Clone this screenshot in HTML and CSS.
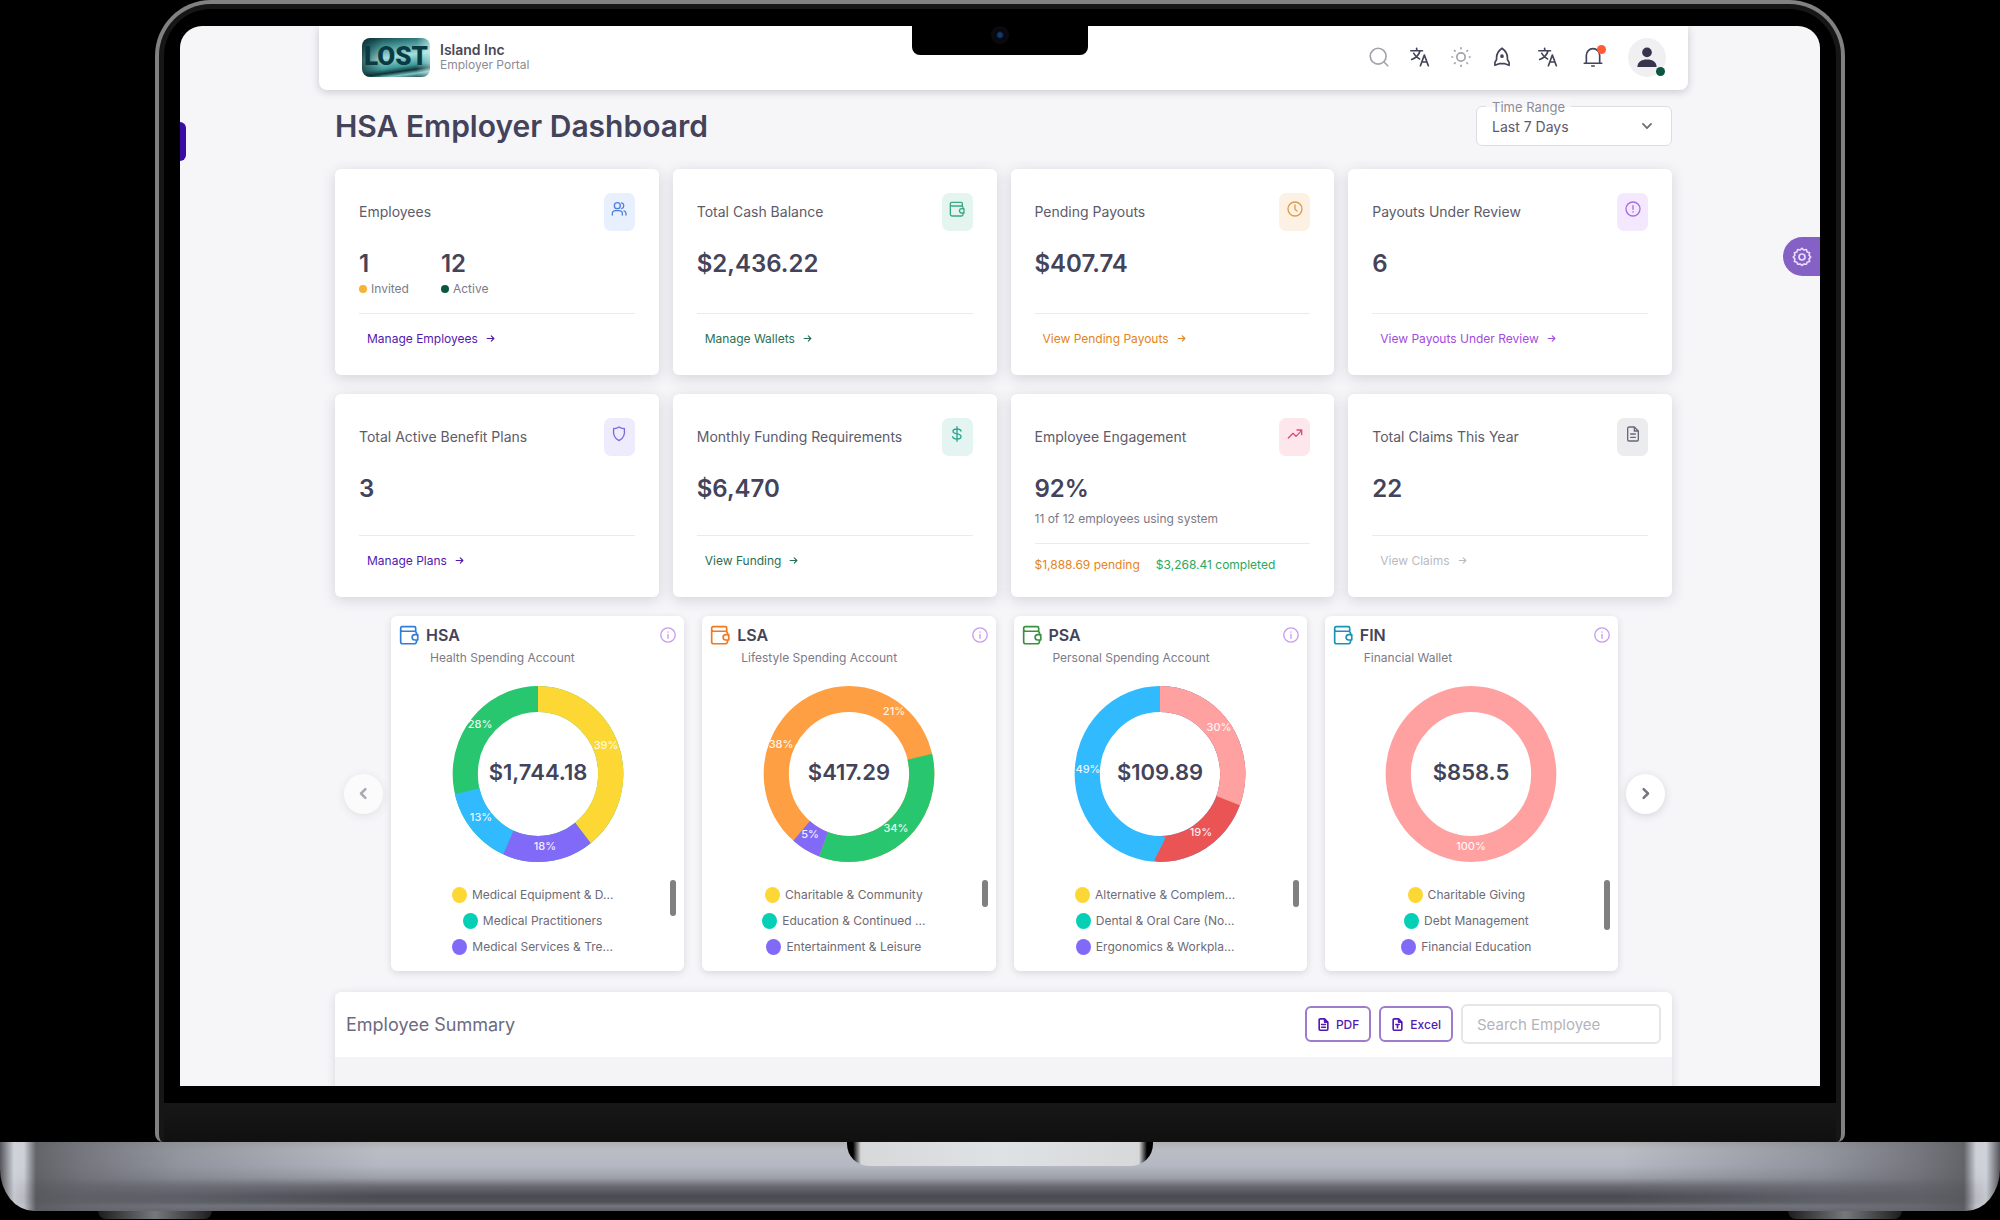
FILE: index.html
```html
<!DOCTYPE html>
<html lang="en">
<head>
    <meta charset="UTF-8">
    <meta name="viewport" content="width=device-width, initial-scale=1.0">
    <title>HSA Employer Dashboard</title>
    <link rel="stylesheet" href="styles.css">
</head>
<body>
    <svg class="sprite" aria-hidden="true">
        <symbol id="i-search" viewBox="0 0 24 24"><circle cx="11" cy="11" r="9.500"/><path d="M18 18L22.500 22.500"/></symbol>
        <symbol id="i-translate" viewBox="0 0 24 24"><path d="M1 4.500h14M8 1.500v3M12 4.500c-1 4.500-5 8.500-10 10.500M4.500 7.500c1.500 3.200 4 5.500 7 6.800M12.500 22.500l4.700-13L22 22.500M14.200 18h6"/></symbol>
        <symbol id="i-sun" viewBox="0 0 24 24"><circle cx="12" cy="12" r="5"/><path d="M12 1v1M12 22v1M1 12h1M22 12h1M4.200 4.200l.7.7M19.100 19.100l.7.7M4.200 19.800l.7-.7M19.100 4.900l.7-.7"/></symbol>
        <symbol id="i-rocket" viewBox="0 0 24 24"><path d="M12 1.500C8 4.500 5.500 8 5.500 12.500V15L3.500 18.500v3.500l5-2h7l5 2v-3.500L18.500 15v-2.500c0-4.500-2.500-8-6.500-11z"/><circle cx="12" cy="11" r="1.200"/></symbol>
        <symbol id="i-bell" viewBox="0 0 24 24"><path d="M1.500 19.500h21M4 19.500V10a8 8 0 0 1 16 0v9.500M10.500 22.800h3"/></symbol>
        <symbol id="i-user" viewBox="0 0 24 24"><circle cx="12" cy="6.500" r="5.800"/><path d="M.5 24c0-5.800 4.500-9 11.500-9s11.500 3.200 11.500 9z"/></symbol>
        <symbol id="i-gear" viewBox="0 0 24 24"><path d="M12 1.500l2.200 2.100 3-.6 1 2.900 2.900 1-.6 3L22.500 12l-2 2.300.6 3-2.900 1-1 2.400-3-.3L12 22l-2.200-1.600-3 .3-1-2.400-2.900-1 .6-3-2-2.300 2-2.100-.6-3 2.900-1 1-2.900 3 .6z"/><circle cx="12" cy="12" r="3.600"/></symbol>
        <symbol id="i-chevron" viewBox="0 0 24 24"><path d="M5 8.500l7 7 7-7"/></symbol>
        <symbol id="i-left" viewBox="0 0 24 24"><path d="M15 5l-7 7 7 7"/></symbol>
        <symbol id="i-right" viewBox="0 0 24 24"><path d="M9 5l7 7-7 7"/></symbol>
        <symbol id="i-arrow" viewBox="0 0 24 24"><path d="M3 12h18M14 5l7 7-7 7"/></symbol>
        <symbol id="i-users" viewBox="0 0 24 24"><circle cx="9.500" cy="7" r="4.500"/><path d="M2 21v-2c0-3 2.500-4.500 5-4.500h5c2.500 0 5 1.500 5 4.500v2M16 2.700a4.500 4.500 0 0 1 0 8.600M22.500 21v-2c0-2-1.200-3.600-3-4.200"/></symbol>
        <symbol id="i-wallet" viewBox="0 0 24 24"><path d="M20 7.500V3.500A1.500 1.500 0 0 0 18.500 2H4a2 2 0 0 0-2 2v16a2.500 2.500 0 0 0 2.500 2.500h14A2.500 2.500 0 0 0 21 20v-2M2 5a2.500 2.500 0 0 0 2.500 2.500h14A2.500 2.500 0 0 1 21 10v2M22.500 11.500V18H19a3.200 3.200 0 0 1 0-6.500z"/></symbol>
        <symbol id="i-clock" viewBox="0 0 24 24"><circle cx="12" cy="12" r="10.500"/><path d="M12 6v6.500l3 2.500"/></symbol>
        <symbol id="i-alert" viewBox="0 0 24 24"><circle cx="12" cy="12" r="10.500"/><path d="M12 7v5.500M12 16v.6"/></symbol>
        <symbol id="i-info" viewBox="0 0 24 24"><circle cx="12" cy="12" r="10.800"/><path d="M12 7.200v.6M12 11v6"/></symbol>
        <symbol id="i-shield" viewBox="0 0 24 24"><path d="M12 1.500c2.500 1.800 5.200 2.500 8 2.300 1 7.200-.5 14.500-8 18.200-7.500-3.700-9-11-8-18.200 2.800.2 5.500-.5 8-2.300z"/></symbol>
        <symbol id="i-dollar" viewBox="0 0 24 24"><path d="M18 7.500C17.500 5.500 15.500 4.500 12 4.500c-3.500 0-6 1.300-6 3.800 0 5 12 2.200 12 7.400 0 2.500-2.500 3.800-6 3.800s-6-1-6.500-3.500M12 1v22"/></symbol>
        <symbol id="i-trend" viewBox="0 0 24 24"><path d="M2 18l7-7 4.500 4.500L22 6.500M15 6h7v7"/></symbol>
        <symbol id="i-file" viewBox="0 0 24 24"><path d="M14 1.500H6a2 2 0 0 0-2 2v17a2 2 0 0 0 2 2h12a2 2 0 0 0 2-2V7.500zM14 1.500v6h6M8.500 12h7M8.500 17h7"/></symbol>
        <symbol id="i-xls" viewBox="0 0 24 24"><path d="M14 1.500H6a2 2 0 0 0-2 2v17a2 2 0 0 0 2 2h12a2 2 0 0 0 2-2V7.500zM14 1.500v6h6M9 12h6M12 12v6"/></symbol>
    </svg>

    <div class="lid">
        <div class="camera-notch"><span class="camera"></span></div>
        <div class="screen">
            <span class="side-tab"></span>
            <button class="gear-btn" type="button" aria-label="Settings"><svg class="icon"><use href="#i-gear"/></svg></button>

            <header class="topbar">
                <div class="logo">LOST</div>
                <div class="brand">
                    <strong>Island Inc</strong>
                    <span>Employer Portal</span>
                </div>
                <nav class="actions">
                    <button type="button" class="muted" aria-label="Search"><svg class="icon"><use href="#i-search"/></svg></button>
                    <button type="button" aria-label="Translate"><svg class="icon"><use href="#i-translate"/></svg></button>
                    <button type="button" class="muted" aria-label="Theme"><svg class="icon"><use href="#i-sun"/></svg></button>
                    <button type="button" aria-label="Shortcuts"><svg class="icon"><use href="#i-rocket"/></svg></button>
                    <button type="button" class="language" aria-label="Language"><svg class="icon"><use href="#i-translate"/></svg></button>
                    <button type="button" class="bell" aria-label="Notifications"><svg class="icon"><use href="#i-bell"/></svg></button>
                    <button type="button" class="avatar" aria-label="Account"><svg class="icon"><use href="#i-user"/></svg></button>
                </nav>
            </header>

            <main class="content">
                <div class="heading">
                    <h1>HSA Employer Dashboard</h1>
                    <div class="range">
                        <label for="range">Time Range</label>
                        <select id="range">
                            <option>Last 7 Days</option>
                            <option>Last 30 Days</option>
                        </select>
                        <svg class="icon"><use href="#i-chevron"/></svg>
                    </div>
                </div>

                <section class="stats">
                    <article class="card">
                        <div class="card-head"><h2>Employees</h2><span class="tile blue"><svg class="icon"><use href="#i-users"/></svg></span></div>
                        <div class="pair">
                            <div><p class="value">1</p><p class="note"><i class="dot amber"></i>Invited</p></div>
                            <div><p class="value">12</p><p class="note"><i class="dot dark"></i>Active</p></div>
                        </div>
                        <div class="card-foot"><a class="link purple" href="#">Manage Employees <svg class="icon"><use href="#i-arrow"/></svg></a></div>
                    </article>
                    <article class="card">
                        <div class="card-head"><h2>Total Cash Balance</h2><span class="tile green"><svg class="icon"><use href="#i-wallet"/></svg></span></div>
                        <p class="value">$2,436.22</p>
                        <div class="card-foot"><a class="link forest" href="#">Manage Wallets <svg class="icon"><use href="#i-arrow"/></svg></a></div>
                    </article>
                    <article class="card">
                        <div class="card-head"><h2>Pending Payouts</h2><span class="tile orange"><svg class="icon"><use href="#i-clock"/></svg></span></div>
                        <p class="value">$407.74</p>
                        <div class="card-foot"><a class="link amber-text" href="#">View Pending Payouts <svg class="icon"><use href="#i-arrow"/></svg></a></div>
                    </article>
                    <article class="card">
                        <div class="card-head"><h2>Payouts Under Review</h2><span class="tile violet"><svg class="icon"><use href="#i-alert"/></svg></span></div>
                        <p class="value">6</p>
                        <div class="card-foot"><a class="link violet-text" href="#">View Payouts Under Review <svg class="icon"><use href="#i-arrow"/></svg></a></div>
                    </article>
                    <article class="card">
                        <div class="card-head"><h2>Total Active Benefit Plans</h2><span class="tile indigo"><svg class="icon"><use href="#i-shield"/></svg></span></div>
                        <p class="value">3</p>
                        <div class="card-foot"><a class="link purple" href="#">Manage Plans <svg class="icon"><use href="#i-arrow"/></svg></a></div>
                    </article>
                    <article class="card">
                        <div class="card-head"><h2>Monthly Funding Requirements</h2><span class="tile teal"><svg class="icon"><use href="#i-dollar"/></svg></span></div>
                        <p class="value">$6,470</p>
                        <div class="card-foot"><a class="link forest" href="#">View Funding <svg class="icon"><use href="#i-arrow"/></svg></a></div>
                    </article>
                    <article class="card">
                        <div class="card-head"><h2>Employee Engagement</h2><span class="tile pink"><svg class="icon"><use href="#i-trend"/></svg></span></div>
                        <p class="value">92%</p>
                        <p class="note spaced">11 of 12 employees using system</p>
                        <div class="card-foot totals"><span class="amber-text">$1,888.69 pending</span><span class="green-text">$3,268.41 completed</span></div>
                    </article>
                    <article class="card">
                        <div class="card-head"><h2>Total Claims This Year</h2><span class="tile gray"><svg class="icon"><use href="#i-file"/></svg></span></div>
                        <p class="value">22</p>
                        <div class="card-foot"><a class="link disabled" href="#">View Claims <svg class="icon"><use href="#i-arrow"/></svg></a></div>
                    </article>
                </section>

                <section class="carousel">
                    <button class="nav-btn" type="button" aria-label="Previous" disabled><svg class="icon"><use href="#i-left"/></svg></button>
                    <div class="wallets">
                        <article class="wallet">
                            <div class="wallet-head"><svg class="icon c-blue"><use href="#i-wallet"/></svg><h3>HSA</h3><svg class="icon info"><use href="#i-info"/></svg></div>
                            <p class="subtitle">Health Spending Account</p>
                            <svg class="donut" viewBox="-100 -88 200 176">
                                <g class="ring">
                                    <circle r="75" pathLength="100" stroke="#28c76f"/>
                                    <circle r="75" pathLength="100" stroke="#fdd835" stroke-dasharray="39.400 100"/>
                                    <circle r="75" pathLength="100" stroke="#826af9" stroke-dasharray="17.300 100" stroke-dashoffset="-39.400"/>
                                    <circle r="75" pathLength="100" stroke="#32baff" stroke-dasharray="14.600 100" stroke-dashoffset="-56.700"/>
                                </g>
                                <text class="pct" x="68" y="-29">39%</text>
                                <text class="pct" x="7" y="72">18%</text>
                                <text class="pct" x="-57" y="43">13%</text>
                                <text class="pct" x="-58" y="-50">28%</text>
                                <text class="total" x="0" y="-2">$1,744.18</text>
                            </svg>
                            <div class="legend">
                                <ul>
                                    <li><i class="swatch yellow"></i>Medical Equipment &amp; D...</li>
                                    <li><i class="swatch aqua"></i>Medical Practitioners</li>
                                    <li><i class="swatch lilac"></i>Medical Services &amp; Tre...</li>
                                </ul>
                                <span class="thumb medium"></span>
                            </div>
                        </article>
                        <article class="wallet">
                            <div class="wallet-head"><svg class="icon c-orange"><use href="#i-wallet"/></svg><h3>LSA</h3><svg class="icon info"><use href="#i-info"/></svg></div>
                            <p class="subtitle">Lifestyle Spending Account</p>
                            <svg class="donut" viewBox="-100 -88 200 176">
                                <g class="ring">
                                    <circle r="75" pathLength="100" stroke="#ff9f43"/>
                                    <circle r="75" pathLength="100" stroke="#28c76f" stroke-dasharray="34.400 100" stroke-dashoffset="-21.300"/>
                                    <circle r="75" pathLength="100" stroke="#826af9" stroke-dasharray="5.600 100" stroke-dashoffset="-55.700"/>
                                </g>
                                <text class="pct" x="45" y="-63">21%</text>
                                <text class="pct" x="47" y="54">34%</text>
                                <text class="pct" x="-39" y="60">5%</text>
                                <text class="pct" x="-68" y="-30">38%</text>
                                <text class="total" x="0" y="-2">$417.29</text>
                            </svg>
                            <div class="legend">
                                <ul>
                                    <li><i class="swatch yellow"></i>Charitable &amp; Community</li>
                                    <li><i class="swatch aqua"></i>Education &amp; Continued ...</li>
                                    <li><i class="swatch lilac"></i>Entertainment &amp; Leisure</li>
                                </ul>
                                <span class="thumb short"></span>
                            </div>
                        </article>
                        <article class="wallet">
                            <div class="wallet-head"><svg class="icon c-green"><use href="#i-wallet"/></svg><h3>PSA</h3><svg class="icon info"><use href="#i-info"/></svg></div>
                            <p class="subtitle">Personal Spending Account</p>
                            <svg class="donut" viewBox="-100 -88 200 176">
                                <g class="ring">
                                    <circle r="75" pathLength="100" stroke="#32baff"/>
                                    <circle r="75" pathLength="100" stroke="#ea5455" stroke-dasharray="50 100"/>
                                    <circle r="75" pathLength="100" stroke="#ffa1a1" stroke-dasharray="30.800 100"/>
                                </g>
                                <text class="pct" x="59" y="-47">30%</text>
                                <text class="pct" x="41" y="58">19%</text>
                                <text class="pct" x="-72" y="-5">49%</text>
                                <text class="total" x="0" y="-2">$109.89</text>
                            </svg>
                            <div class="legend">
                                <ul>
                                    <li><i class="swatch yellow"></i>Alternative &amp; Complem...</li>
                                    <li><i class="swatch aqua"></i>Dental &amp; Oral Care (No...</li>
                                    <li><i class="swatch lilac"></i>Ergonomics &amp; Workpla...</li>
                                </ul>
                                <span class="thumb short"></span>
                            </div>
                        </article>
                        <article class="wallet">
                            <div class="wallet-head"><svg class="icon c-cyan"><use href="#i-wallet"/></svg><h3>FIN</h3><svg class="icon info"><use href="#i-info"/></svg></div>
                            <p class="subtitle">Financial Wallet</p>
                            <svg class="donut" viewBox="-100 -88 200 176">
                                <g class="ring">
                                    <circle r="75" stroke="#ffa1a1"/>
                                </g>
                                <text class="pct" x="0" y="72">100%</text>
                                <text class="total" x="0" y="-2">$858.5</text>
                            </svg>
                            <div class="legend">
                                <ul>
                                    <li><i class="swatch yellow"></i>Charitable Giving</li>
                                    <li><i class="swatch aqua"></i>Debt Management</li>
                                    <li><i class="swatch lilac"></i>Financial Education</li>
                                </ul>
                                <span class="thumb long"></span>
                            </div>
                        </article>
                    </div>
                    <button class="nav-btn" type="button" aria-label="Next"><svg class="icon"><use href="#i-right"/></svg></button>
                </section>

                <section class="summary">
                    <div class="summary-head">
                        <h2>Employee Summary</h2>
                        <button class="export" type="button"><svg class="icon"><use href="#i-file"/></svg>PDF</button>
                        <button class="export" type="button"><svg class="icon"><use href="#i-xls"/></svg>Excel</button>
                        <input type="text" placeholder="Search Employee" aria-label="Search Employee">
                    </div>
                    <div class="summary-body"></div>
                </section>
            </main>
        </div>
        <div class="chin"></div>
    </div>
    <div class="base"><div class="lip"></div></div>
    <div class="feet"><span></span><span></span></div>
</body>
</html>
```
FILE: styles.css
```css
* {
    box-sizing: border-box;
}
body {
    display: flex;
    flex-direction: column;
    height: 100vh;
    margin: 0;
    background-color: #000;
    color: #6d6b77;
    font-family: Inter, "Noto Sans", sans-serif;
    font-size: 14px;
    overflow: hidden;
}
h1, h2, h3, p, ul {
    margin: 0;
    padding: 0;
}
button, select, input {
    font-family: inherit;
}
button {
    padding: 0;
    border: none;
    background: none;
    color: inherit;
    cursor: pointer;
}
a {
    text-decoration: none;
}
.sprite {
    position: absolute;
    width: 0;
    height: 0;
}
.icon {
    flex: none;
    width: 16px;
    height: 16px;
    fill: none;
    stroke: currentColor;
    stroke-width: 2;
    stroke-linecap: round;
    stroke-linejoin: round;
}

/* laptop */
.lid {
    position: relative;
    flex: 1;
    display: flex;
    flex-direction: column;
    min-height: 0;
    margin: 0 155px;
    padding: 22px 21px 0;
    border: 4px solid #828080;
    border-bottom: none;
    border-radius: 56px 56px 8px 8px;
    box-shadow: inset 0 0 0 5px #161616;
}
.screen {
    position: relative;
    flex: 1;
    min-height: 0;
    overflow: hidden;
    border-radius: 22px 22px 0 0;
    background-color: #f6f6f9;
}
.chin {
    flex: none;
    height: 39px;
    margin: 17px -16px 0;
    background: linear-gradient(#171717, #101010);
}
.camera-notch {
    position: absolute;
    z-index: 2;
    top: 18px;
    left: 50%;
    width: 176px;
    height: 33px;
    margin-left: -88px;
    border-radius: 0 0 8px 8px;
    background-color: #000;
}
.camera {
    display: block;
    width: 18px;
    height: 18px;
    margin: 4px auto;
    border-radius: 50%;
    background: radial-gradient(circle, #123a72 2px, #05070d 4px, #0c0c0f 9px);
}
.base {
    flex: none;
    height: 69px;
    border-radius: 0 0 34px 34px / 0 0 42px 42px;
    background:
        linear-gradient(90deg, #55565b 0, rgba(210, 213, 220, 0.9) 14px, rgba(210, 213, 220, 0.8) 24px, rgba(90, 91, 96, 0.9) 36px, rgba(100, 101, 108, 0.8) 80px, rgba(110, 112, 122, 0.5) 180px, rgba(130, 132, 142, 0) 380px, rgba(130, 132, 142, 0) calc(100% - 380px), rgba(110, 112, 122, 0.5) calc(100% - 180px), rgba(100, 101, 108, 0.8) calc(100% - 80px), rgba(90, 91, 96, 0.9) calc(100% - 36px), rgba(210, 213, 220, 0.8) calc(100% - 24px), rgba(210, 213, 220, 0.9) calc(100% - 14px), #55565b 100%),
        linear-gradient(#aeb0b3, #bbbdc4 8px, #b4b8c2 24px, #9da0a9 36px, #6b6c73 44px, #4b4c52 54px, #505157 60px, #74757d 64px, #5e5f66);
}
.lip {
    width: 306px;
    height: 24px;
    margin: 0 auto;
    border-radius: 0 0 22px 22px;
    background: linear-gradient(90deg, #000 6px, #d6d8da 14px, #dfe2e4 50%, #d6d8da calc(100% - 14px), #000 calc(100% - 6px));
}
.feet {
    flex: none;
    display: flex;
    justify-content: space-between;
    height: 9px;
    padding: 0 98px;
}
.feet span {
    width: 114px;
    height: 8px;
    border-radius: 0 0 14px 14px;
    background: linear-gradient(90deg, #1c1c1e, #77787c 50%, #1c1c1e);
}
.side-tab {
    position: absolute;
    top: 96px;
    left: 0;
    width: 6px;
    height: 39px;
    border-radius: 0 6px 6px 0;
    background-color: #3a0ca3;
}
.gear-btn {
    position: absolute;
    top: 211px;
    right: 0;
    width: 37px;
    height: 39px;
    border-radius: 20px 0 0 20px;
    background-color: #8561c5;
    color: #eadcff;
}
.gear-btn .icon {
    display: block;
    width: 20px;
    height: 20px;
    margin-left: 9px;
}

/* top bar */
.topbar {
    display: flex;
    align-items: center;
    height: 64px;
    margin: 0 132px 0 139px;
    padding: 0 22px 2px 43px;
    border-radius: 0 0 8px 8px;
    background-color: #fff;
    box-shadow: 0 2px 8px rgba(47, 43, 61, 0.22);
}
.logo {
    width: 68px;
    height: 39px;
    border-radius: 8px;
    background:
        linear-gradient(90deg, rgba(8, 40, 46, 0.7), rgba(8, 40, 46, 0) 30%, rgba(8, 40, 46, 0) 80%, rgba(220, 250, 248, 0.5)),
        linear-gradient(172deg, #0d3a3f 0, #3d8c8d 22%, #a5dedb 48%, #3f9a9a 70%, #0d3438 80%, #7cc5c3 88%, #0a2528);
    color: #0a3b42;
    font: 900 26px/36px Roboto, sans-serif;
    text-align: center;
}
.brand {
    margin-left: 10px;
    line-height: 15px;
    font-size: 12px;
    color: #8d8b96;
}
.brand strong {
    display: block;
    font-size: 14px;
    font-weight: 600;
    color: #4a4757;
}
.actions {
    display: flex;
    align-items: center;
    gap: 21px;
    margin-left: auto;
    color: #43435a;
}
.actions .icon {
    display: block;
    width: 20px;
    height: 20px;
}
.actions .muted {
    color: #a3a2ab;
}
.actions .language {
    margin-left: 5px;
}
.actions .bell {
    position: relative;
    margin: 0 4px;
}
.bell::after {
    content: "";
    position: absolute;
    top: -2px;
    right: -3px;
    width: 9px;
    height: 9px;
    border-radius: 50%;
    background-color: #ff5a36;
}
.actions .avatar {
    position: relative;
    width: 38px;
    height: 39px;
    border-radius: 50%;
    background-color: #f0f0f2;
    color: #37344d;
}
.avatar .icon {
    margin: 0 auto;
    fill: currentColor;
    stroke: none;
}
.avatar::after {
    content: "";
    position: absolute;
    right: 1px;
    bottom: 1px;
    width: 9px;
    height: 9px;
    border-radius: 50%;
    background-color: #0b5541;
}

/* content */
.content {
    padding: 16px 148px 0 155px;
}
.heading {
    display: flex;
    justify-content: space-between;
    align-items: center;
    margin-bottom: 23px;
}
h1 {
    font-size: 30px;
    line-height: 38px;
    font-weight: 600;
    color: #43435a;
}
.range {
    position: relative;
    width: 196px;
}
.range label {
    position: absolute;
    top: -8px;
    left: 10px;
    padding: 0 6px;
    background: linear-gradient(#f6f6f9 50%, #fff 50%);
    font-size: 13px;
    line-height: 18px;
    color: #8d8b96;
}
.range select {
    display: block;
    width: 100%;
    height: 40px;
    padding: 0 15px;
    border: 1px solid #dddce2;
    border-radius: 6px;
    background-color: #fff;
    appearance: none;
    font-size: 14px;
    color: #5d596c;
}
.range .icon {
    position: absolute;
    top: 13px;
    right: 18px;
    width: 14px;
    height: 14px;
    stroke-width: 3;
    pointer-events: none;
}
.stats {
    display: grid;
    grid-template-columns: repeat(4, 1fr);
    gap: 19px 14px;
}
.card {
    display: flex;
    flex-direction: column;
    padding: 24px;
    border-radius: 6px;
    background-color: #fff;
    box-shadow: 0 3px 14px rgba(47, 43, 61, 0.17);
}
.card-head {
    display: flex;
    justify-content: space-between;
    align-items: center;
    margin-bottom: 16px;
}
.card h2 {
    font-size: 14px;
    line-height: 20px;
    font-weight: 400;
    color: #5d5b6a;
}
.tile {
    width: 31px;
    height: 38px;
    padding-top: 8px;
    border-radius: 7px;
}
.tile .icon {
    display: block;
    margin: 0 auto;
}
.tile.blue { background-color: #e8effd; color: #4f7fe0; }
.tile.green { background-color: #e4f4ee; color: #3aa985; }
.tile.orange { background-color: #fdf1e4; color: #e09a4c; }
.tile.violet { background-color: #f3e8fd; color: #a96be6; }
.tile.indigo { background-color: #edebfc; color: #7a6ae0; }
.tile.teal { background-color: #e4f4f1; color: #2ba68f; }
.tile.pink { background-color: #fde7ec; color: #dd4a7c; }
.tile.gray { background-color: #ececee; color: #66697a; }
.value {
    font-size: 24px;
    line-height: 33px;
    font-weight: 600;
    color: #43435a;
}
.pair {
    display: flex;
    gap: 32px;
}
.note {
    font-size: 12px;
    line-height: 17px;
    color: #7d7a88;
}
.note.spaced {
    margin-top: 5px;
}
.dot {
    display: inline-block;
    width: 8px;
    height: 8px;
    margin-right: 4px;
    border-radius: 50%;
}
.dot.amber { background-color: #f9b233; }
.dot.dark { background-color: #0b5541; }
.card-foot {
    margin-top: auto;
    padding-top: 12px;
    border-top: 1px solid #ebebee;
}
.note + .card-foot,
.pair + .card-foot {
    margin-top: 16px;
}
.link {
    display: flex;
    align-items: center;
    gap: 8px;
    padding: 0 8px;
    font-size: 12px;
    line-height: 25px;
}
.link .icon {
    width: 9px;
    height: 9px;
    stroke-width: 3;
}
.totals {
    display: flex;
    gap: 16px;
    font-size: 12px;
    line-height: 17px;
}
.purple { color: #5218b0; }
.forest { color: #2b6f52; }
.amber-text { color: #e38422; }
.green-text { color: #2aa85c; }
.violet-text { color: #a24be0; }
.disabled { color: #bbbac2; }

/* wallets */
.carousel {
    display: grid;
    grid-template-columns: 56px 1fr 54px;
    align-items: center;
    margin: 19px 0 21px;
}
.nav-btn {
    justify-self: center;
    width: 39px;
    height: 40px;
    border-radius: 50%;
    background-color: #fff;
    box-shadow: 0 2px 8px rgba(47, 43, 61, 0.16);
    color: #77767f;
}
.nav-btn:disabled {
    opacity: 0.6;
}
.nav-btn .icon {
    display: block;
    width: 15px;
    height: 15px;
    margin: 0 auto;
    stroke-width: 4;
}
.wallets {
    display: grid;
    grid-template-columns: repeat(4, 1fr);
    gap: 18px;
}
.wallet {
    padding: 10px 8px 11px;
    border-radius: 6px;
    background-color: #fff;
    box-shadow: 0 2px 7px rgba(47, 43, 61, 0.15);
}
.wallet-head {
    display: flex;
    align-items: center;
    height: 18px;
}
.wallet-head .icon {
    width: 20px;
    height: 20px;
}
.wallet-head .info {
    width: 16px;
    height: 16px;
    margin-left: auto;
    color: #c89af0;
}
.wallet h3 {
    margin-left: 7px;
    font-size: 16px;
    font-weight: 600;
    color: #43435a;
}
.c-blue { color: #2f7fd6; }
.c-orange { color: #ee7a22; }
.c-green { color: #3a8f40; }
.c-cyan { color: #1793b5; }
.subtitle {
    margin: 5px 0 19px 31px;
    font-size: 12px;
    line-height: 18px;
    color: #7d7a88;
}
.donut {
    display: block;
    width: 200px;
    height: 176px;
    margin: 0 auto;
}
/* the rings are slightly taller than wide */
.ring {
    fill: none;
    stroke-width: 26;
    transform: scale(0.97, 1) rotate(-90deg);
}
.pct, .total {
    text-anchor: middle;
    dominant-baseline: central;
}
.pct {
    fill: rgba(255, 255, 255, 0.9);
    font-size: 11px;
    font-weight: 500;
}
.total {
    fill: #43435a;
    font-size: 22px;
    font-weight: 600;
}
.legend {
    position: relative;
    margin-top: 20px;
    padding-right: 10px;
}
.legend ul {
    list-style: none;
}
.legend li {
    display: flex;
    justify-content: center;
    align-items: center;
    gap: 5px;
    font-size: 12px;
    line-height: 26px;
    color: #6d6b77;
}
.swatch {
    width: 15px;
    height: 16px;
    border-radius: 50%;
}
.swatch.yellow { background-color: #fdd835; }
.swatch.aqua { background-color: #05d0b5; }
.swatch.lilac { background-color: #826af9; }
.thumb {
    position: absolute;
    top: -2px;
    right: 0;
    width: 6px;
    border-radius: 3px;
    background-color: #808080;
}
.thumb.short { height: 27px; }
.thumb.medium { height: 36px; }
.thumb.long { height: 50px; }

/* summary */
.summary {
    border-radius: 6px;
    background-color: #fff;
    box-shadow: 0 2px 10px rgba(47, 43, 61, 0.15);
}
.summary-head {
    display: flex;
    align-items: center;
    gap: 8px;
    padding: 12px 11px 13px;
}
.summary-head h2 {
    margin-right: auto;
    font-size: 18px;
    font-weight: 400;
    color: #6d6b80;
}
.export {
    display: flex;
    align-items: center;
    gap: 6px;
    height: 36px;
    padding: 0 10px;
    border: 2px solid #9c7ccb;
    border-radius: 6px;
    font-size: 12px;
    font-weight: 500;
    color: #5218b0;
}
.export .icon {
    width: 13px;
    height: 13px;
    stroke-width: 3;
}
.summary-head input {
    width: 200px;
    height: 40px;
    padding: 0 14px;
    border: 2px solid #e6e6ea;
    border-radius: 6px;
    font-size: 15px;
}
.summary-head input::placeholder {
    color: #b5b4bc;
}
.summary-body {
    height: 60px;
    background-color: #f4f4f7;
}
```
